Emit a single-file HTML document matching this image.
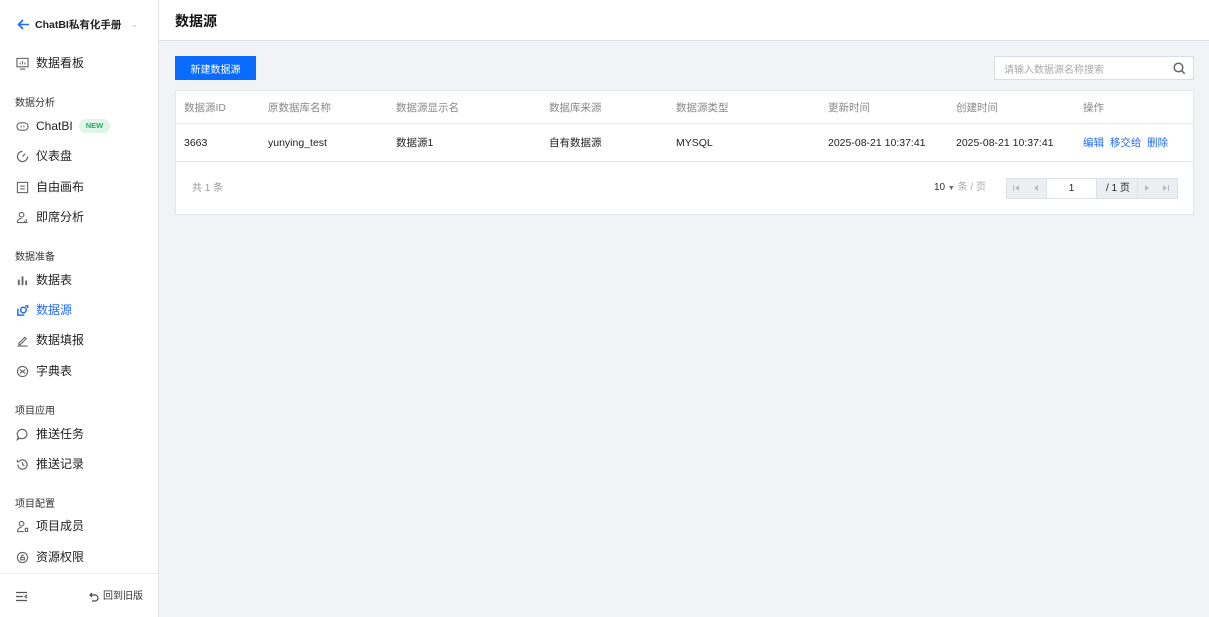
<!DOCTYPE html>
<html><head><meta charset="utf-8"><style>
*{box-sizing:border-box;margin:0;padding:0}
body{width:1209px;height:617px;overflow:hidden;background:#f2f3f7;font-family:"Liberation Sans","Noto Sans CJK SC",sans-serif;color:#222;position:relative;font-size:12px}
.side{position:absolute;left:0;top:0;width:159px;height:617px;background:#fff;border-right:1px solid #e3e4e8}
.abs{position:absolute;white-space:nowrap}
.item{position:absolute;left:16px;font-size:12px;color:#222;display:flex;align-items:center;gap:7px;line-height:14px}
.item svg{width:13px;height:13px}
.grp{position:absolute;left:15px;font-size:10px;color:#333}
.hdr{position:absolute;left:159px;top:0;width:1050px;height:41px;background:#fff;border-bottom:1px solid #dfe1e6}
.tbl{position:absolute;left:175px;top:90px;width:1019px;height:125px;background:#fff;border:1px solid #e3e5ea}
.th{position:absolute;top:10px;font-size:10.5px;color:#888;line-height:14px}
.td{position:absolute;top:45px;font-size:10.5px;color:#222;line-height:14px}
.pg{position:absolute;top:178px;height:21px;background:#eceef2;border:1px solid #dde0e6}
.fc{display:flex;align-items:center}
</style></head><body>
<div class="side">
 <svg class="abs" style="left:17px;top:19px" width="13" height="11" viewBox="0 0 13 11" fill="none" stroke="#1f6bff" stroke-width="1.6"><path d="M12 5.5H2M6 1L1.5 5.5 6 10"/></svg>
 <div class="abs" style="left:35px;top:19px;font-size:10.5px;font-weight:bold;color:#222;line-height:13px">ChatBI私有化手册</div>
 <div class="abs" style="left:131px;top:20px;font-size:8px;color:#bbb">⌄</div>
 <div class="item" style="top:56px"><svg viewBox="0 0 14 14" fill="none" stroke="#666" stroke-width="1.2"><rect x="1" y="1.5" width="12" height="9"/><path d="M4 13h6M4.5 8V6M7 8V4.5M9.5 8V6"/></svg>数据看板</div>
 <div class="grp" style="top:94px">数据分析</div>
 <div class="item" style="top:119px"><svg viewBox="0 0 14 14" fill="none" stroke="#666" stroke-width="1.2"><rect x="1" y="3" width="12" height="8" rx="4"/><path d="M5.5 6v2M8.5 6v2"/></svg>ChatBI<span style="background:#dff5e8;color:#2aa866;font-size:7.5px;font-weight:bold;padding:2px 7px;border-radius:8px;margin-left:-1px;line-height:10px">NEW</span></div>
 <div class="item" style="top:149px"><svg viewBox="0 0 14 14" fill="none" stroke="#666" stroke-width="1.3"><path d="M12.5 7A5.5 5.5 0 1 1 7 1.5"/><path d="M7 7l3-3"/></svg>仪表盘</div>
 <div class="item" style="top:180px"><svg viewBox="0 0 14 14" fill="none" stroke="#666" stroke-width="1.2"><rect x="1.5" y="1.5" width="11" height="11"/><path d="M4.5 5.5h5M4.5 8.5h5"/></svg>自由画布</div>
 <div class="item" style="top:210px"><svg viewBox="0 0 14 14" fill="none" stroke="#666" stroke-width="1.2"><circle cx="6" cy="4" r="2.5"/><path d="M1.5 12.5c0-3 2-4.5 4.5-4.5M9 12.5v-2M11 12.5v-4M1.5 12.5h11"/></svg>即席分析</div>
 <div class="grp" style="top:248px">数据准备</div>
 <div class="item" style="top:273px"><svg viewBox="0 0 14 14" fill="#666"><rect x="2" y="6" width="2" height="6"/><rect x="6" y="2.5" width="2" height="9.5"/><rect x="10" y="7" width="2" height="5"/></svg>数据表</div>
 <div class="item" style="top:303px;color:#1f6bff"><svg viewBox="0 0 14 14" fill="none" stroke="#1f6bff" stroke-width="1.6"><path d="M2 5v7h7"/><circle cx="8" cy="6.5" r="3"/><path d="M10 2h2.5v2.5"/></svg>数据源</div>
 <div class="item" style="top:333px"><svg viewBox="0 0 14 14" fill="none" stroke="#666" stroke-width="1.2"><path d="M3 10l6.5-6.5 1.5 1.5L4.5 11.5H3zM1.5 13h11"/></svg>数据填报</div>
 <div class="item" style="top:364px"><svg viewBox="0 0 14 14" fill="none" stroke="#666" stroke-width="1.2"><circle cx="7" cy="7" r="5.5"/><path d="M4 5l6 4M4 9l6-4"/></svg>字典表</div>
 <div class="grp" style="top:402px">项目应用</div>
 <div class="item" style="top:427px"><svg viewBox="0 0 14 14" fill="none" stroke="#666" stroke-width="1.3"><path d="M7 1.5a5.5 5 0 1 1-3 9.5L1.5 12.5l1-3A5.5 5 0 0 1 7 1.5z"/></svg>推送任务</div>
 <div class="item" style="top:457px"><svg viewBox="0 0 14 14" fill="none" stroke="#666" stroke-width="1.3"><path d="M2 7a5 5 0 1 0 1.5-3.5M1.5 2v2h2"/><path d="M7 4.5V7l2 1.5"/></svg>推送记录</div>
 <div class="grp" style="top:495px">项目配置</div>
 <div class="item" style="top:519px"><svg viewBox="0 0 14 14" fill="none" stroke="#666" stroke-width="1.2"><circle cx="6" cy="4" r="2.5"/><path d="M1.5 12.5c0-3 2-4.5 4.5-4.5M1.5 12.5h7M10 9h2.5v3.5H10z"/></svg>项目成员</div>
 <div class="item" style="top:550px"><svg viewBox="0 0 14 14" fill="none" stroke="#666" stroke-width="1.2"><circle cx="7" cy="7" r="5.5"/><path d="M5 9.5h4V7H5zM6 7V5.5a1 1 0 0 1 2 0"/></svg>资源权限</div>
 <div style="position:absolute;left:0;top:573px;width:158px;border-top:1px solid #eceef1"></div>
 <div class="abs" style="left:15px;top:591px"><svg width="13" height="11" viewBox="0 0 13 11" fill="none" stroke="#555" stroke-width="1.2"><path d="M1 1.5h11M1 5.5h7M1 9.5h11M12 4l-2 1.5L12 7"/></svg></div>
 <div class="abs fc" style="left:89px;top:590px;font-size:10px;color:#333;gap:4px;line-height:13px"><svg width="10" height="10" viewBox="0 0 10 10" fill="none" stroke="#444" stroke-width="1.2"><path d="M3 1L1 3l2 2M1 3h5a3 3 0 0 1 0 6H3"/></svg>回到旧版</div>
</div>
<div class="hdr"><div class="abs" style="left:16px;top:11px;font-size:14px;font-weight:bold;color:#111">数据源</div></div>
<div class="abs fc" style="left:175px;top:56px;width:81px;height:24px;background:#0a6cff;color:#fff;font-size:10px;justify-content:center">新建数据源</div>
<div class="abs fc" style="left:994px;top:56px;width:200px;height:24px;background:#fff;border:1px solid #d9dce2;font-size:10px;color:#aaa;padding-left:9px">请输入数据源名称搜索
 <svg style="position:absolute;right:7px;top:5px" width="13" height="13" viewBox="0 0 13 13" fill="none" stroke="#666" stroke-width="1.5"><circle cx="5.5" cy="5.5" r="4.3"/><path d="M8.7 8.7l3 3"/></svg></div>
<div class="tbl">
 <div style="position:absolute;left:0;top:32px;width:100%;border-top:1px solid #e6e8ec"></div>
 <div style="position:absolute;left:0;top:70px;width:100%;border-top:1px solid #e6e8ec"></div>
 <div class="th" style="left:8px">数据源ID</div><div class="th" style="left:92px">原数据库名称</div><div class="th" style="left:220px">数据源显示名</div><div class="th" style="left:373px">数据库来源</div><div class="th" style="left:500px">数据源类型</div><div class="th" style="left:652px">更新时间</div><div class="th" style="left:780px">创建时间</div><div class="th" style="left:907px">操作</div>
 <div class="td" style="left:8px">3663</div><div class="td" style="left:92px">yunying_test</div><div class="td" style="left:220px">数据源1</div><div class="td" style="left:373px">自有数据源</div><div class="td" style="left:500px">MYSQL</div><div class="td" style="left:652px">2025-08-21 10:37:41</div><div class="td" style="left:780px">2025-08-21 10:37:41</div>
 <div class="td" style="left:907px;color:#1f6bff">编辑&nbsp;&nbsp;移交给&nbsp;&nbsp;删除</div>
 <div class="abs" style="left:16px;top:91px;font-size:10px;color:#999;line-height:14px">共 1 条</div>
</div>
<div class="abs" style="left:934px;top:181px;font-size:10px;color:#333;line-height:14px">10 <span style="font-size:7px;color:#666">▼</span> <span style="color:#aaa">条 / 页</span></div>
<div class="pg" style="left:1006px;width:172px"></div>
<svg class="abs" style="left:1012px;top:184px" width="8" height="8" viewBox="0 0 8 8" fill="#bbb"><rect x="1" y="1" width="1" height="6"/><path d="M7 1v6L3 4z"/></svg>
<svg class="abs" style="left:1032px;top:184px" width="8" height="8" viewBox="0 0 8 8" fill="#bbb"><path d="M6 1v6L2 4z"/></svg>
<div class="abs fc" style="left:1046px;top:178px;width:51px;height:21px;background:#fff;border:1px solid #dde0e6;justify-content:center;font-size:10px">1</div>
<div class="abs" style="left:1106px;top:182px;font-size:10px;color:#222;line-height:13px">/ 1 页</div>
<div class="abs" style="left:1137px;top:178px;width:40px;height:21px;border-left:1px solid #dde0e6"></div>
<svg class="abs" style="left:1143px;top:184px" width="8" height="8" viewBox="0 0 8 8" fill="#bbb"><path d="M2 1v6L6 4z"/></svg>
<svg class="abs" style="left:1162px;top:184px" width="8" height="8" viewBox="0 0 8 8" fill="#bbb"><path d="M1 1v6L5 4z"/><rect x="6" y="1" width="1" height="6"/></svg>
</body></html>
